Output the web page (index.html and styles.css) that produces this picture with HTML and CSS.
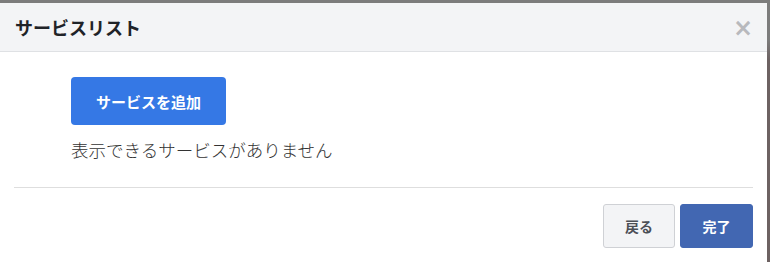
FILE: index.html
```html
<!DOCTYPE html>
<html lang="ja">
<head>
    <meta charset="UTF-8">
    <title>サービスリスト</title>
    <link rel="stylesheet" href="styles.css">
</head>
<body>
    <div class="modal">
        <div class="modal-header">
            <h2 class="modal-title">サービスリスト</h2>
            <button class="close" type="button">&times;</button>
        </div>
        <div class="modal-body">
            <button class="btn-add" type="button">サービスを追加</button>
            <p class="empty">表示できるサービスがありません</p>
        </div>
        <div class="modal-footer">
            <button class="btn-back" type="button">戻る</button>
            <button class="btn-done" type="button">完了</button>
        </div>
    </div>
</body>
</html>
```

FILE: styles.css
```css
body {
    margin: 0;
    padding-top: 3px;
    height: 259px;
    overflow: hidden;
    background: linear-gradient(to bottom, #7c7c7c 0, #7c7c7c 40px, #6d6262 60px);
    font-family: "Noto Sans CJK JP", "Noto Sans", sans-serif;
}

.modal {
    width: 767px;
    height: 259px;
    background-color: #fff;
}

.modal-header {
    height: 48px;
    display: flex;
    align-items: center;
    justify-content: space-between;
    padding: 0 14px 0 15px;
    background-color: #f3f4f6;
    border-bottom: 1px solid #dfe1e4;
}

.modal-title {
    margin: 0;
    font-size: 18px;
    font-weight: bold;
    color: #1f2328;
}

.close {
    border: none;
    background: none;
    padding: 0;
    margin-top: 2px;
    font-family: "DejaVu Sans", sans-serif;
    font-size: 24px;
    font-weight: bold;
    color: #b8b9bd;
    line-height: 1;
}

.modal-body {
    padding: 25px 14px 0 57px;
    height: 110px;
    border-bottom: 1px solid #dedede;
    margin: 0 14px;
}

.btn-add {
    width: 155px;
    height: 48px;
    border: none;
    border-radius: 4px;
    background-color: #3578e5;
    color: #fff;
    font-family: inherit;
    font-size: 15px;
    font-weight: bold;
}

.empty {
    margin: 12px 0 0;
    font-size: 17.5px;
    font-weight: 300;
    color: #333;
}

.modal-footer {
    display: flex;
    justify-content: flex-end;
    gap: 5px;
    padding: 16px 14px 0 0;
}

.btn-back,
.btn-done {
    height: 44px;
    border-radius: 3px;
    font-family: inherit;
    font-size: 14px;
    font-weight: bold;
}

.btn-back {
    width: 72px;
    background-color: #f3f4f6;
    border: 1px solid #cfd1d5;
    color: #4b4f56;
}

.btn-done {
    width: 73px;
    background-color: #4267b2;
    border: 1px solid #4267b2;
    color: #fff;
}
```
